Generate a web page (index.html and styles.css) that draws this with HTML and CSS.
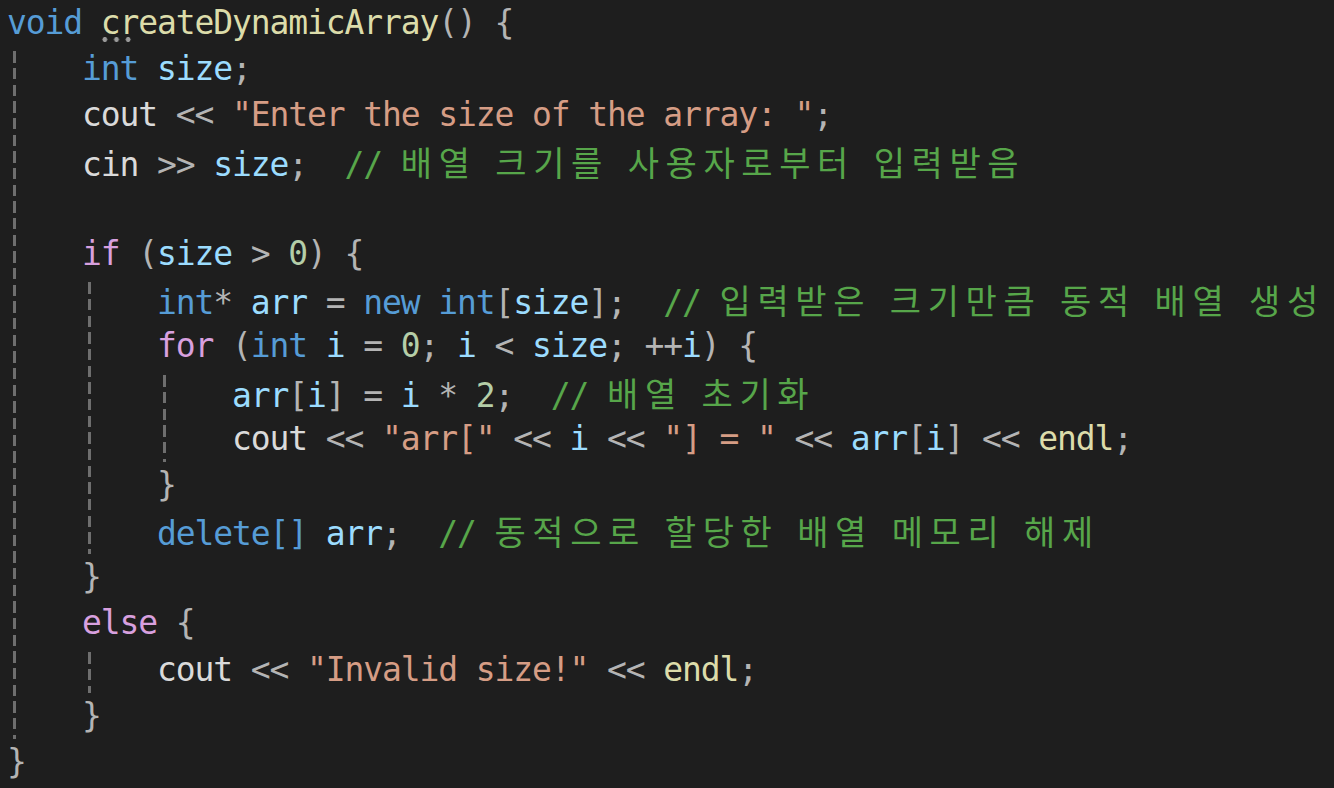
FILE: index.html
```html
<!DOCTYPE html>
<html lang="ko">
<head>
<meta charset="utf-8">
<title>createDynamicArray</title>
<link rel="stylesheet" href="styles.css">
</head>
<body>
<div class="code">
  <div class="ln"><span class="kw">void</span> <span class="fn"><span class="hint">cr</span>eateDynamicArray</span><span class="pu">()</span> <span class="pu">{</span></div>
  <div class="blk">
    <div class="ln"><span class="kw">int</span> <span class="var">size</span><span class="pu">;</span></div>
    <div class="ln"><span class="id">cout</span> <span class="pu">&lt;&lt;</span> <span class="str">"Enter the size of the array: "</span><span class="pu">;</span></div>
    <div class="ln"><span class="id">cin</span> <span class="pu">&gt;&gt;</span> <span class="var">size</span><span class="pu">;</span>  <span class="cm">// <span class="ko">배열</span> <span class="ko">크기를</span> <span class="ko">사용자로부터</span> <span class="ko">입력받음</span></span></div>
    <div class="ln"></div>
    <div class="ln"><span class="ctl">if</span> <span class="pu">(</span><span class="var">size</span> <span class="pu">&gt;</span> <span class="num">0</span><span class="pu">)</span> <span class="pu">{</span></div>
    <div class="blk">
      <div class="ln"><span class="kw">int</span><span class="pu">*</span> <span class="var">arr</span> <span class="pu">=</span> <span class="kw">new</span> <span class="kw">int</span><span class="pu">[</span><span class="var">size</span><span class="pu">];</span>  <span class="cm">// <span class="ko">입력받은</span> <span class="ko">크기만큼</span> <span class="ko">동적</span> <span class="ko">배열</span> <span class="ko">생성</span></span></div>
      <div class="ln"><span class="ctl">for</span> <span class="pu">(</span><span class="kw">int</span> <span class="var">i</span> <span class="pu">=</span> <span class="num">0</span><span class="pu">;</span> <span class="var">i</span> <span class="pu">&lt;</span> <span class="var">size</span><span class="pu">;</span> <span class="pu">++</span><span class="var">i</span><span class="pu">)</span> <span class="pu">{</span></div>
      <div class="blk">
        <div class="ln"><span class="var">arr</span><span class="pu">[</span><span class="var">i</span><span class="pu">]</span> <span class="pu">=</span> <span class="var">i</span> <span class="pu">*</span> <span class="num">2</span><span class="pu">;</span>  <span class="cm">// <span class="ko">배열</span> <span class="ko">초기화</span></span></div>
        <div class="ln"><span class="id">cout</span> <span class="pu">&lt;&lt;</span> <span class="str">"arr["</span> <span class="pu">&lt;&lt;</span> <span class="var">i</span> <span class="pu">&lt;&lt;</span> <span class="str">"] = "</span> <span class="pu">&lt;&lt;</span> <span class="var">arr</span><span class="pu">[</span><span class="var">i</span><span class="pu">]</span> <span class="pu">&lt;&lt;</span> <span class="fn">endl</span><span class="pu">;</span></div>
      </div>
      <div class="ln"><span class="pu">}</span></div>
      <div class="ln"><span class="kw">delete[]</span> <span class="var">arr</span><span class="pu">;</span>  <span class="cm">// <span class="ko">동적으로</span> <span class="ko">할당한</span> <span class="ko">배열</span> <span class="ko">메모리</span> <span class="ko">해제</span></span></div>
    </div>
    <div class="ln"><span class="pu">}</span></div>
    <div class="ln"><span class="ctl">else</span> <span class="pu">{</span></div>
    <div class="blk">
      <div class="ln"><span class="id">cout</span> <span class="pu">&lt;&lt;</span> <span class="str">"Invalid size!"</span> <span class="pu">&lt;&lt;</span> <span class="fn">endl</span><span class="pu">;</span></div>
    </div>
    <div class="ln"><span class="pu">}</span></div>
  </div>
  <div class="ln"><span class="pu">}</span></div>
</div>
</body>
</html>
```

FILE: styles.css
```css
html, body {
  margin: 0;
  padding: 0;
  background: #1e1e1e;
  overflow: hidden;
}

.code {
  padding: 0 0 0 7px;
  font-family: "DejaVu Sans Mono", "Liberation Mono", monospace;
  font-size: 33px;
  letter-spacing: -1.12px;
  line-height: 46.2px;
  color: #dadada;
}

.ln {
  height: 46.2px;
  white-space: pre;
}

.blk {
  padding-left: 75px;
  background-image: repeating-linear-gradient(to bottom, transparent 0, transparent 5.3px, #6e6e6e 5.3px, #6e6e6e 16.67px);
  background-size: 3px 100%;
  background-position: 6px 0;
  background-repeat: no-repeat;
}

.kw { color: #569cd6; }
.ctl { color: #d8a0df; }
.fn { color: #dcdcaa; }
.var { color: #9cdcfe; }
.str { color: #d69d85; }
.cm { color: #57a64a; }
.num { color: #b5cea8; }
.pu { color: #b4b4b4; }
.id { color: #dadada; }

.ko {
  font-family: "Noto Sans CJK KR", "Noto Sans", sans-serif;
  font-size: 34px;
  letter-spacing: 6.6px;
}

.hint {
  position: relative;
}

.hint::after {
  content: "";
  position: absolute;
  left: -1.6px;
  top: 34px;
  width: 35px;
  height: 5px;
  background: radial-gradient(circle, #9a9a9a 2.2px, transparent 2.7px) 0 0 / 11.67px 5px repeat-x;
}
```
